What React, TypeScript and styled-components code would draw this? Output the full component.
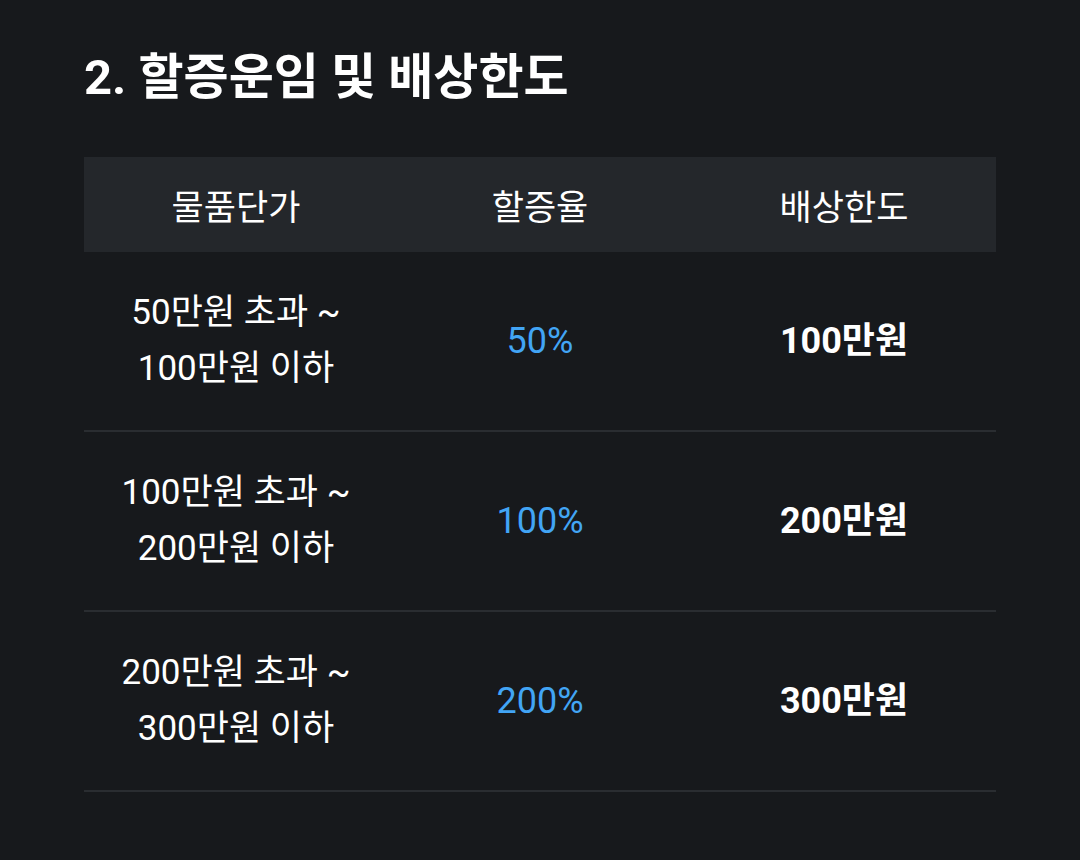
import React from 'react';
import styled, { createGlobalStyle } from 'styled-components';

const GlobalStyle = createGlobalStyle`
  html, body {
    margin: 0;
    padding: 0;
    background: #17191c;
  }
  body {
    font-family: Roboto, "Noto Sans CJK KR", sans-serif;
    color: #ffffff;
  }
`;

const Page = styled.main`
  padding: 43px 84px 60px;
  min-height: 860px;
  box-sizing: border-box;
`;

const Title = styled.h2`
  margin: 0 0 44px;
  font-size: 49px;
  font-weight: 700;
  line-height: 70px;
`;

const Table = styled.table`
  width: 912px;
  border-collapse: collapse;
  table-layout: fixed;
`;

const HeadCell = styled.th`
  height: 95px;
  padding: 0;
  background: #24272b;
  font-size: 35px;
  font-weight: 400;
  text-align: center;
`;

const Row = styled.tr`
  border-bottom: 2px solid #2a2d31;
`;

const Cell = styled.td<{ $tone?: 'blue' | 'bold' }>`
  height: 178px;
  padding: 0;
  text-align: center;
  font-size: ${p => (p.$tone ? '36px' : '35px')};
  line-height: 56px;
  color: ${p => (p.$tone === 'blue' ? '#42a5f5' : '#ffffff')};
  font-weight: ${p => (p.$tone === 'bold' ? 700 : 400)};
`;

const rows = [
  { range: ['50만원 초과 ~', '100만원 이하'], rate: '50%', limit: '100만원' },
  { range: ['100만원 초과 ~', '200만원 이하'], rate: '100%', limit: '200만원' },
  { range: ['200만원 초과 ~', '300만원 이하'], rate: '200%', limit: '300만원' },
];

const App: React.FC = () => {
  return (
    <>
      <GlobalStyle />
      <Page>
        <Title>2. 할증운임 및 배상한도</Title>
        <Table>
          <thead>
            <tr>
              <HeadCell>물품단가</HeadCell>
              <HeadCell>할증율</HeadCell>
              <HeadCell>배상한도</HeadCell>
            </tr>
          </thead>
          <tbody>
            {rows.map(r => (
              <Row key={r.rate}>
                <Cell>
                  {r.range[0]}
                  <br />
                  {r.range[1]}
                </Cell>
                <Cell $tone="blue">{r.rate}</Cell>
                <Cell $tone="bold">{r.limit}</Cell>
              </Row>
            ))}
          </tbody>
        </Table>
      </Page>
    </>
  );
};

export default App;
